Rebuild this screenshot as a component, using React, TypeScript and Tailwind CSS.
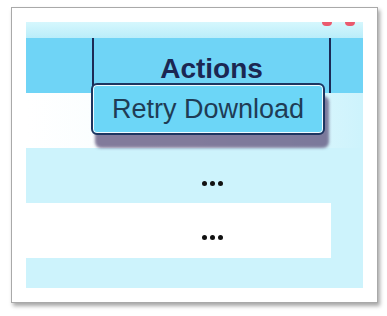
import React from 'react';

function Dots() {
    return (
        <div className="flex gap-[3px]">
            <span className="w-[5px] h-[5px] rounded-full bg-[#111]" />
            <span className="w-[5px] h-[5px] rounded-full bg-[#111]" />
            <span className="w-[5px] h-[5px] rounded-full bg-[#111]" />
        </div>
    );
}

export default function App() {
    return (
        <div className="w-[387px] h-[316px] bg-white pt-[7px] pl-[11px]" style={{ fontFamily: '"Liberation Sans", Arial, sans-serif' }}>
            <div className="w-[367px] h-[296px] bg-white border border-[#a9a9a9] shadow-[2px_3px_4px_rgba(0,0,0,0.35)] pt-[14px] pl-[14px]">
                <div className="relative w-[337px] h-[266px] overflow-hidden bg-[#cdf3fc]">
                    {/* top strip */}
                    <div className="relative h-[16px] bg-gradient-to-b from-[#d6f7fd] to-[#b9edfa]">
                        <span className="absolute left-[296px] top-0 w-[10px] h-[4px] rounded-b-full bg-[#ea5a6e]" />
                        <span className="absolute left-[319px] top-0 w-[10px] h-[4px] rounded-b-full bg-[#ea5a6e]" />
                    </div>

                    {/* header row */}
                    <div className="flex h-[55px] bg-[#6fd4f6]">
                        <div className="w-[66px]" />
                        <div className="w-[237px] border-l-2 border-[#1c2a55] flex justify-center pt-[17px]">
                            <span className="text-[28px] leading-none font-bold text-[#1b2752]">Actions</span>
                        </div>
                        <div className="flex-1 border-l-2 border-[#1c2a55]" />
                    </div>

                    {/* rows */}
                    <div className="h-[55px] bg-gradient-to-r from-white via-[#f4fcfe] to-[#cdf3fc]" />
                    <div className="h-[55px] bg-[#cdf3fc] pt-[33px] pl-[176px]">
                        <Dots />
                    </div>
                    <div className="h-[55px] flex">
                        <div className="w-[305px] bg-white pt-[32px] pl-[176px]">
                            <Dots />
                        </div>
                        <div className="flex-1 bg-[#cdf3fc]" />
                    </div>
                    <div className="h-[35px] bg-[#cdf3fc] flex items-end pl-[176px]">
                        <div className="flex gap-[3px] opacity-20 translate-y-[2px]">
                            <span className="w-[5px] h-[4px] rounded-t-full bg-[#555]" />
                            <span className="w-[5px] h-[4px] rounded-t-full bg-[#555]" />
                            <span className="w-[5px] h-[4px] rounded-t-full bg-[#555]" />
                        </div>
                    </div>

                    {/* tooltip menu */}
                    <div className="absolute left-[65px] top-[61px] w-[234px] h-[52px] rounded-[6px] border-2 border-[#1d3560] bg-[#6cd6f7] shadow-[inset_0_0_0_1px_rgba(255,255,255,0.9),4px_13px_3px_rgba(100,90,130,0.8)] flex items-center justify-center">
                        <span className="text-[27px] text-[#1f3c55]">Retry Download</span>
                    </div>
                </div>
            </div>
        </div>
    );
}
